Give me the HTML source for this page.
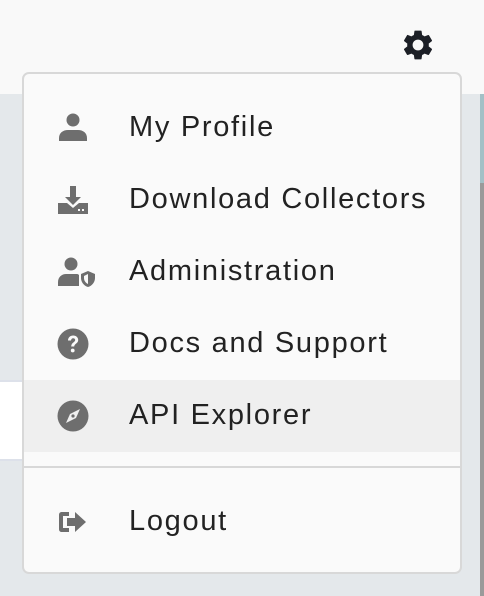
<!DOCTYPE html>
<html><head><style>
body{margin:0;width:484px;height:596px;overflow:hidden;position:relative;background:#e4e8eb;font-family:"Liberation Sans",Roboto,sans-serif}
.top{position:absolute;left:0;top:0;width:484px;height:94px;background:#f9f9f9}
.strip1{position:absolute;left:480px;top:94px;width:4px;height:89px;background:#a3c0c6}
.strip2{position:absolute;left:480px;top:183px;width:4px;height:413px;background:#9a9a9a}
.wbox{position:absolute;left:0;top:380px;width:24px;height:77px;background:#fff;border-top:2px solid #dde1ea;border-bottom:2px solid #dde1ea}
.menu{position:absolute;left:22px;top:72px;width:436px;height:498px;background:#fafafa;border:2px solid #d8d8d8;border-radius:7px;overflow:hidden}
.item{position:absolute;left:0;width:436px;height:72px}
.item span{position:absolute;left:105px;top:50%;transform:translateY(-52%);font-size:29px;color:#222;letter-spacing:1.7px;white-space:nowrap}
.item svg{position:absolute;left:31px;top:50%;transform:translateY(-50%)}
.hl{background:#efefef}
.div{position:absolute;left:0;top:392px;width:436px;height:2px;background:#d8d8d8}
</style></head><body>
<div class="top"></div>
<div class="strip1"></div><div class="strip2"></div>
<div class="wbox"></div>
<svg style="position:absolute;left:400px;top:27px" width="36" height="36" viewBox="0 0 24 24"><path fill="#1c1f26" d="M19.14 12.94c.04-.3.06-.61.06-.94 0-.32-.02-.64-.07-.94l2.030-1.58a.49.49 0 0 0 .12-.61l-1.920-3.32a.49.49 0 0 0-.59-.22l-2.390.96c-.5-.38-1.030-.7-1.620-.94l-.36-2.540a.48.48 0 0 0-.48-.41h-3.840c-.24 0-.43.17-.47.41l-.36 2.540c-.59.24-1.130.57-1.620.94l-2.390-.96a.48.48 0 0 0-.59.22L2.74 8.87c-.12.21-.08.47.12.61l2.030 1.580c-.05.3-.09.63-.09.94s.02.64.07.94l-2.030 1.580a.49.49 0 0 0-.12.61l1.920 3.320c.12.22.37.29.59.22l2.390-.96c.5.38 1.030.7 1.620.94l.36 2.540c.05.24.24.41.48.41h3.840c.24 0 .44-.17.47-.41l.36-2.540c.59-.24 1.130-.56 1.620-.94l2.390.96c.22.08.47 0 .59-.22l1.920-3.320c.12-.22.07-.47-.12-.61l-2.010-1.580zM12 15.6A3.6 3.6 0 1 1 12 8.4a3.6 3.6 0 0 1 0 7.2z"/></svg>
<div class="menu">
<div class="item" style="top:18px"><svg width="36" height="36" viewBox="0 0 36 36"><circle cx="18" cy="10" r="6.5" fill="#6e6e6e"/><path d="M4 31v-3c0-5 4-8 9-8h10c5 0 9 3 9 8v3z" fill="#6e6e6e"/></svg><span>My Profile</span></div>
<div class="item" style="top:90px"><svg width="36" height="36" viewBox="0 0 36 36"><path d="M15 4h6v11h5l-8 8-8-8h5z" fill="#6e6e6e"/><path d="M3 21h9l6 5 6-5h9v11H3z" fill="#6e6e6e"/><rect x="23" y="27" width="2" height="2" fill="#fafafa"/><rect x="27" y="27" width="2" height="2" fill="#fafafa"/></svg><span>Download Collectors</span></div>
<div class="item" style="top:162px"><svg width="44" height="36" viewBox="0 0 44 36"><circle cx="16" cy="10" r="6.5" fill="#6e6e6e"/><path d="M3 32v-4c0-5 4-8 8-8h11c1 0 2 1 2 1v11z" fill="#6e6e6e"/><path d="M33 17l-7 3v4c0 4 3 8 7 9 4-1 7-5 7-9v-4z" fill="#6e6e6e"/><path d="M33 20v10c-2-1-4-3-4-6v-2z" fill="#fafafa"/></svg><span>Administration</span></div>
<div class="item" style="top:234px"><svg width="36" height="36" viewBox="0 0 36 36"><circle cx="18" cy="18" r="15.5" fill="#6e6e6e"/><path d="M13 14.5c0-3 2.3-5 5.2-5 3 0 5 2 5 4.5 0 3.5-4 3.8-4 6.5h-3c0-4 4-4.3 4-6.5 0-1-.8-1.8-2-1.8s-2.1.9-2.2 2.3z" fill="#fafafa"/><circle cx="17.7" cy="24.5" r="1.9" fill="#fafafa"/></svg><span>Docs and Support</span></div>
<div class="item hl" style="top:306px"><svg width="36" height="36" viewBox="0 0 36 36"><circle cx="18" cy="18" r="15.5" fill="#6e6e6e"/><path d="M25 11l-4 9-10 5 4-9z" fill="#efefef"/><circle cx="18" cy="18" r="1.6" fill="#6e6e6e"/></svg><span>API Explorer</span></div>
<div class="div"></div>
<div class="item" style="top:412px"><svg width="36" height="36" viewBox="0 0 36 36"><path d="M14 8H7c-2 0-3 1-3 3v14c0 2 1 3 3 3h7v-4H8V12h6z" fill="#6e6e6e"/><path d="M12 14h8V8l11 10-11 10v-6h-8z" fill="#6e6e6e"/></svg><span>Logout</span></div>
</div>
</body></html>
